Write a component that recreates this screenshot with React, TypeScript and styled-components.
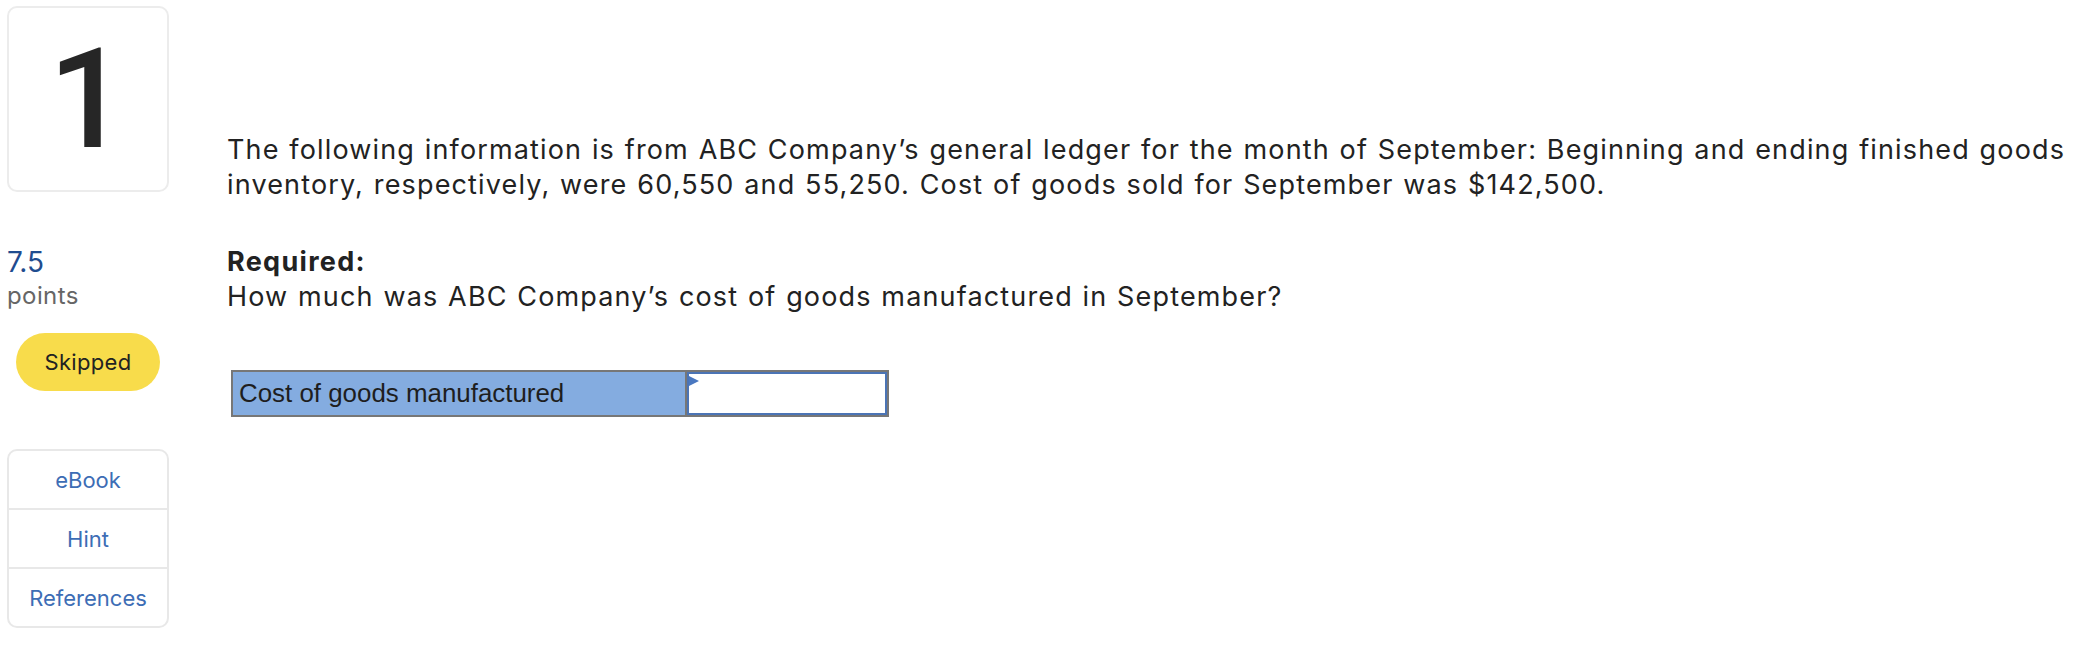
import React from "react";
import styled, { createGlobalStyle } from "styled-components";

const GlobalStyle = createGlobalStyle`
  body {
    margin: 0;
    background: #ffffff;
    font-family: Inter, Lato, "Open Sans", sans-serif;
    color: #222222;
  }
`;

const Page = styled.div`
  display: flex;
  flex-direction: row;
  align-items: flex-start;
  padding: 6px 0 0 7px;
`;

const Sidebar = styled.div`
  display: flex;
  flex-direction: column;
  width: 162px;
  flex-shrink: 0;
`;

const NumberCard = styled.div`
  box-sizing: border-box;
  height: 186px;
  display: flex;
  align-items: center;
  justify-content: center;
  border: 2px solid #ececec;
  border-radius: 10px;
  font-family: Roboto, "Noto Sans", sans-serif;
  font-weight: 500;
  font-size: 140px;
  line-height: 1;
  color: #262626;
`;

const Points = styled.div`
  margin-top: 52px;
  display: flex;
  flex-direction: column;
`;

const PointsValue = styled.span`
  font-size: 28px;
  line-height: 36px;
  color: #1f4c8f;
`;

const PointsLabel = styled.span`
  font-size: 24px;
  line-height: 32px;
  letter-spacing: 0.4px;
  color: #666666;
`;

const StatusPill = styled.div`
  margin: 21px 0 0 9px;
  width: 144px;
  height: 58px;
  border-radius: 29px;
  background: #f8dc4b;
  display: flex;
  align-items: center;
  justify-content: center;
  font-size: 22px;
  letter-spacing: 0.3px;
  color: #222222;
`;

const ToolList = styled.div`
  margin-top: 58px;
  box-sizing: border-box;
  border: 2px solid #e8e8e8;
  border-radius: 10px;
  display: flex;
  flex-direction: column;
`;

const ToolLink = styled.div`
  height: 57px;
  display: flex;
  align-items: center;
  justify-content: center;
  font-size: 22px;
  color: #3d6db5;
  & + & {
    border-top: 2px solid #e8e8e8;
  }
`;

const Main = styled.div`
  margin: 126px 0 0 58px;
  flex: 1;
  padding-right: 12px;
`;

const Paragraph = styled.p`
  margin: 0;
  font-size: 27px;
  line-height: 35px;
  letter-spacing: 1.15px;
  word-spacing: 1px;
  color: #222222;
`;

const Required = styled.div`
  margin-top: 42px;
  font-size: 27px;
  line-height: 35px;
  letter-spacing: 1.15px;
  word-spacing: 1px;
`;

const Bold = styled.strong`
  font-weight: 700;
  letter-spacing: 1.3px;
  display: block;
`;

const AnswerTable = styled.div`
  margin: 56px 0 0 4px;
  display: flex;
  width: 658px;
  box-sizing: border-box;
  border: 2px solid #777777;
`;

const LabelCell = styled.div`
  width: 454px;
  height: 43px;
  box-sizing: border-box;
  background: #84ace0;
  border-right: 2px solid #777777;
  display: flex;
  align-items: center;
  padding-left: 6px;
  font-family: "Liberation Sans", Arial, sans-serif;
  font-size: 25.9px;
  color: #1e1e1e;
`;

const InputCell = styled.div`
  position: relative;
  flex: 1;
  height: 43px;
  box-sizing: border-box;
  border: 2px solid #4b74b5;
  background: #ffffff;
`;

const Marker = styled.span`
  position: absolute;
  top: 2px;
  left: 0;
  width: 0;
  height: 0;
  border-top: 5px solid transparent;
  border-bottom: 5px solid transparent;
  border-left: 10px solid #4a78c0;
`;

export default function App() {
  return (
    <>
      <GlobalStyle />
      <Page>
        <Sidebar>
          <NumberCard>1</NumberCard>
          <Points>
            <PointsValue>7.5</PointsValue>
            <PointsLabel>points</PointsLabel>
          </Points>
          <StatusPill>Skipped</StatusPill>
          <ToolList>
            <ToolLink>eBook</ToolLink>
            <ToolLink>Hint</ToolLink>
            <ToolLink>References</ToolLink>
          </ToolList>
        </Sidebar>
        <Main>
          <Paragraph>
            The following information is from ABC Company’s general ledger for
            the month of September: Beginning and ending finished goods
            inventory, respectively, were 60,550 and 55,250. Cost of goods sold
            for September was $142,500.
          </Paragraph>
          <Required>
            <Bold>Required:</Bold>
            How much was ABC Company’s cost of goods manufactured in September?
          </Required>
          <AnswerTable>
            <LabelCell>Cost of goods manufactured</LabelCell>
            <InputCell>
              <Marker />
            </InputCell>
          </AnswerTable>
        </Main>
      </Page>
    </>
  );
}
